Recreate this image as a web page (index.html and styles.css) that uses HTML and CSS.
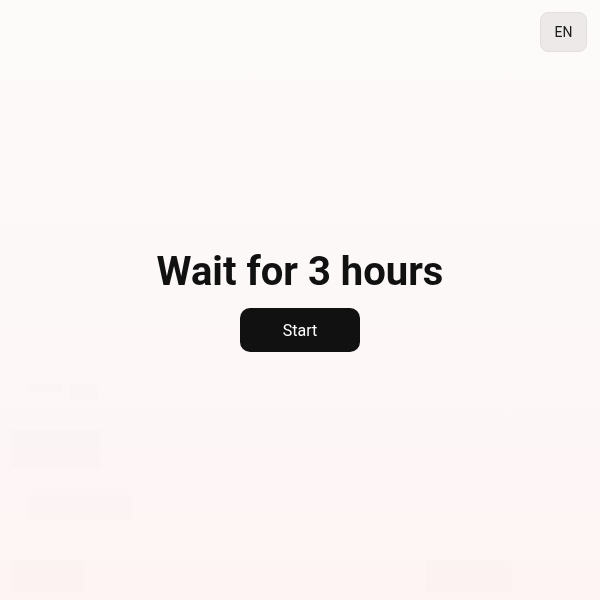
FILE: index.html
```html
<!DOCTYPE html>
<html lang="en">
<head>
<meta charset="utf-8">
<title>Wait</title>
<link rel="stylesheet" href="styles.css">
</head>
<body>
<div class="page">
  <div class="ghost-spacer"></div>
  <div class="ghost-row">
    <span class="ghost g1"></span>
    <span class="ghost g2"></span>
  </div>
  <div class="ghost g3"></div>
  <div class="ghost g4"></div>
  <div class="ghost-foot">
    <span class="ghost g5"></span>
    <span class="ghost g6"></span>
  </div>
</div>
<div class="overlay">
  <button class="lang">EN</button>
  <main class="center">
    <h1 class="title">Wait for 3 hours</h1>
    <button class="start">Start</button>
  </main>
</div>
</body>
</html>
```
FILE: styles.css
```css
* { box-sizing: border-box; }
html, body { margin: 0; padding: 0; }
body {
  width: 600px;
  height: 600px;
  overflow: hidden;
  font-family: Roboto, "Noto Sans", Arial, sans-serif;
  background: linear-gradient(180deg, #fdfafa 0%, #fdf8f8 50%, #fef4f4 100%);
}
.page {
  height: 600px;
  display: flex;
  flex-direction: column;
  padding: 0 12px;
}
.ghost-spacer { height: 383px; flex: none; }
.ghost { display: block; background: rgba(120, 90, 90, 0.011); }
.ghost-row { display: flex; gap: 7px; padding-left: 16px; }
.g1 { width: 35px; height: 9px; }
.g2 { width: 27px; height: 17px; }
.g3 { width: 88px; height: 37px; margin-top: 30px; }
.g4 { width: 104px; height: 25px; margin-top: 28px; margin-left: 16px; }
.ghost-foot { display: flex; justify-content: space-between; margin-top: 40px; padding-right: 76px; }
.g5 { width: 72px; height: 32px; }
.g6 { width: 87px; height: 32px; }

.overlay {
  position: fixed;
  inset: 0;
  display: flex;
  align-items: center;
  justify-content: center;
}
.lang {
  position: absolute;
  top: 12px;
  right: 13px;
  width: 47px;
  height: 40px;
  border: 1px solid #e2dede;
  background: #ede9e9;
  border-radius: 8px;
  font-family: Roboto, Arial, sans-serif;
  font-size: 14px;
  color: #1a1a1a;
  padding: 0;
}
.center {
  display: flex;
  flex-direction: column;
  align-items: center;
  gap: 12px;
}
.title {
  margin: 0;
  font-size: 40px;
  line-height: 48px;
  font-weight: 700;
  color: #111111;
  letter-spacing: 0;
}
.start {
  width: 120px;
  height: 44px;
  border: none;
  border-radius: 10px;
  background: #111111;
  color: #ffffff;
  font-family: Roboto, Arial, sans-serif;
  font-size: 16px;
  padding: 0;
}
```
